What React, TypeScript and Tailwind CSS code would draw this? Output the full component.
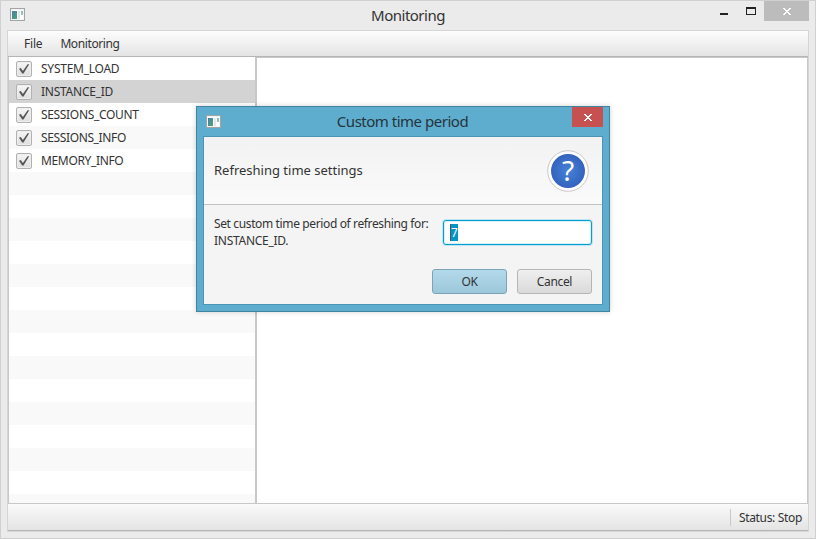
import React from "react";

const items = [
  { name: "SYSTEM_LOAD", spacing: "tracking-[-0.25px]" },
  { name: "INSTANCE_ID", spacing: "tracking-[-0.25px]" },
  { name: "SESSIONS_COUNT", spacing: "tracking-[-0.33px]" },
  { name: "SESSIONS_INFO", spacing: "tracking-[-0.37px]" },
  { name: "MEMORY_INFO", spacing: "tracking-[-0.35px]" },
];

const rows = Array.from({ length: 20 }, (_, i) => items[i]);

function AppIcon() {
  return (
    <div className="flex h-[13px] w-[15px] shrink-0 border border-[#a0a5a8] bg-white p-px shadow-[inset_0_0_0_1px_#f4f4f4]">
      <div className="mt-px h-[8px] w-[5px] bg-linear-to-br from-[#487fa5] to-[#4fa477]" />
      <div className="ml-px mt-px h-[8px] w-[3px] bg-[#e7e7e7]" />
      <div className="ml-px mt-px h-[4px] w-[2px] bg-linear-to-b from-[#8db9c6] to-[#9cc9a5]" />
    </div>
  );
}

function CheckBox() {
  return (
    <div className="flex size-4 shrink-0 items-center justify-center rounded-[2px] border border-[#b1b1b1] bg-linear-to-b from-[#f6f6f6] to-[#dedede] shadow-[inset_0_0_0_1px_#eeeeee]">
      <svg width="12" height="12" viewBox="0 0 12 12" className="block shrink-0">
        <path d="M1 5.8 L2.8 5 L4.9 8 L9.6 1.2 L11.2 1.2 L5.5 10.6 L4.2 10.6 Z" fill="#555" />
      </svg>
    </div>
  );
}

function CloseGlyph() {
  return (
    <svg width="8" height="7" viewBox="0 0 8 7" shapeRendering="crispEdges" className="block">
      <path d="M0 0h2v1h1v1h2V1h1V0h2v1H7v1H6v1H5v1h1v1h1v1h1v1H6V6H5V5H3v1H2v1H0V6h1V5h1V4h1V3H2V2H1V1H0z" fill="#fff" />
    </svg>
  );
}

function Dialog() {
  return (
    <div className="absolute left-[195px] top-[105px] flex h-[206px] w-[414px] flex-col border border-[#40849f] bg-[#5eadce] px-[6px] pb-[6px] shadow-[0_0_5px_rgba(0,0,0,0.18)]">
      <div className="flex h-[29px] shrink-0">
        <div className="flex w-[70px] pl-[3px] pt-[8px]"><AppIcon /></div>
        <div className="flex h-[29px] flex-1 justify-center">
          <span className="mr-[1px] whitespace-nowrap text-[15px] leading-[29px] tracking-[-0.49px] text-[#26343b]">Custom time period</span>
        </div>
        <div className="flex h-[20px] w-[70px] justify-end">
          <div className="flex h-[20px] w-[31px] items-center justify-center bg-[#c75050]"><CloseGlyph /></div>
        </div>
      </div>
      <div className="flex flex-1 flex-col border border-[#4a95b4] bg-[#f4f4f4]">
        <div className="flex h-[68px] shrink-0 items-center justify-between border-b border-[#c2c2c2] bg-linear-to-b from-[#f2f2f2] to-[#fafafa] pl-[10px] pr-[13px]">
          <span className="whitespace-nowrap pt-px text-[13px]">Refreshing time settings</span>
          <svg width="42" height="42" viewBox="0 0 42 42" className="block">
            <defs>
              <radialGradient id="help">
                <stop offset="0" stopColor="#4684d8" />
                <stop offset="1" stopColor="#3462bd" />
              </radialGradient>
            </defs>
            <circle cx="21" cy="21" r="20.3" fill="#fff" stroke="#c8c8c8" />
            <circle cx="21" cy="21" r="17" fill="url(#help)" />
            <text x="21" y="31" textAnchor="middle" fontFamily="Noto Sans, sans-serif" fontSize="28" fill="#fff">?</text>
          </svg>
        </div>
        <div className="flex h-[40px] shrink-0 justify-between pl-[10px] pr-[10px] pt-[10px]">
          <div className="text-[12px] leading-[17px]">
            <div className="whitespace-nowrap tracking-[-0.37px]">Set custom time period of refreshing for:</div>
            <div className="tracking-[-0.28px]">INSTANCE_ID.</div>
          </div>
          <div className="mt-[5px] flex h-[25px] w-[149px] items-center rounded-[3px] border border-[#039ed3] bg-white pl-[6px] shadow-[0_0_0_1px_#c2e4f0,inset_0_0_0_1px_#d8f0f8]">
            <div className="h-[17px] w-[8px] border-l border-[#555] bg-[#0096c9] text-[12px] leading-[17px] text-white">7</div>
          </div>
        </div>
        <div className="mt-[24px] flex justify-end gap-[10px] pr-[10px] text-center text-[12px] leading-[23px]">
          <div className="h-[25px] w-[75px] rounded-[3px] border border-[#7da4b6] bg-linear-to-b from-[#b3daeb] to-[#9cc7da] tracking-[-0.5px]">OK</div>
          <div className="h-[25px] w-[75px] rounded-[3px] border border-[#b5b5b5] bg-linear-to-b from-[#efefef] to-[#dadada] tracking-[-0.35px]">Cancel</div>
        </div>
      </div>
    </div>
  );
}

export default function App() {
  return (
    <div className="relative flex h-[539px] w-[816px] flex-col overflow-hidden border border-[#d0d0d0] bg-[#ebebeb] px-[6px] pb-[6px] font-['Noto_Sans',sans-serif] text-[#333]">
      <div className="flex h-[29px] shrink-0">
        <div className="w-[130px] pl-[3px] pt-[7px]"><AppIcon /></div>
        <div className="flex-1 text-center text-[15px] leading-[29px] tracking-[-0.5px]">Monitoring</div>
        <div className="flex w-[130px] justify-end">
          <div className="mr-[18px] mt-[12px] h-[2px] w-[8px] bg-[#222]" />
          <div className="mr-[8px] mt-[6px] h-[8px] w-[10px] border border-t-2 border-[#222]" />
          <div className="flex h-[20px] w-[45px] items-center justify-center bg-[#bcbcbc]"><CloseGlyph /></div>
        </div>
      </div>
      <div className="flex flex-1 flex-col border border-[#d5d5d5]">
        <div className="flex h-[26px] shrink-0 items-center gap-[18px] border-b border-[#b5b5b5] bg-linear-to-b from-[#fdfdfd] to-[#e4e4e4] pl-[16px] text-[12px]">
          <span className="tracking-[-0.2px]">File</span>
          <span className="tracking-[-0.4px]">Monitoring</span>
        </div>
        <div className="flex h-[447px] shrink-0 border-b border-[#c8c8c8]">
          <div className="h-[446px] w-[248px] overflow-hidden border-x border-[#c8c8c8]">
            {rows.map((row, i) => (
              <div key={i} className={`flex h-[23px] items-center gap-[9px] pl-[7px] text-[12px] ${i === 1 ? "bg-[#d3d3d3]" : i % 2 ? "bg-[#f9f9f9]" : "bg-white"}`}>
                {row && <CheckBox />}
                {row && <span className={row.spacing}>{row.name}</span>}
              </div>
            ))}
          </div>
          <div className="flex-1 border-x border-t border-[#c8c8c8] bg-white" />
        </div>
        <div className="flex flex-1 items-center justify-end border-b border-[#b5b5b5] bg-linear-to-b from-[#fafafa] to-[#e4e4e4] pr-[6px] text-[12px]">
          <div className="mr-[8px] h-[17px] w-px bg-[#c8c8c8]" />
          <span className="pt-px tracking-[-0.33px]">Status: Stop</span>
        </div>
      </div>
      <Dialog />
    </div>
  );
}
